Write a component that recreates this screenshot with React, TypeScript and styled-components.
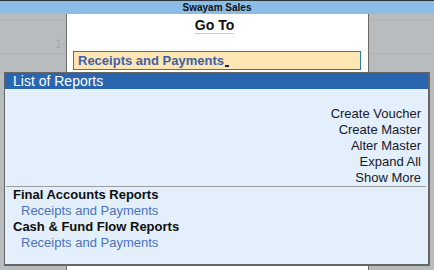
import styled, { createGlobalStyle } from 'styled-components';

const GlobalStyle = createGlobalStyle`
  html, body {
    margin: 0;
    padding: 0;
  }
  body {
    font-family: "Liberation Sans", Arial, sans-serif;
  }
`;

const Screen = styled.div`
  position: relative;
  display: flex;
  flex-direction: column;
  width: 434px;
  height: 270px;
  overflow: hidden;
  background: #b8bcbf;
`;

const TopBar = styled.div`
  height: 13px;
  border-top: 1px solid #2b363c;
  background: #8bbde6;
  font-size: 10px;
  font-weight: 700;
  line-height: 13px;
  text-align: center;
  color: #111;
`;

const Workspace = styled.div`
  flex: 1;
  display: flex;
  background:
    linear-gradient(#afb3b6, #afb3b6) 0 6px / 100% 1px no-repeat,
    linear-gradient(#afb3b6, #afb3b6) 0 39px / 100% 1px no-repeat,
    #b8bcbf;
`;

const Gutter = styled.div`
  width: 66px;
  padding: 23px 0 0 55px;
  box-sizing: border-box;
  white-space: nowrap;
  font-size: 12px;
  color: #a4a8ab;
`;

const GoToPanel = styled.div`
  display: flex;
  flex-direction: column;
  align-items: flex-start;
  width: 301px;
  border-left: 1px solid #707070;
  border-right: 1px solid #6a6a6a;
  background: #fff;
`;

const PanelTitle = styled.div`
  align-self: center;
  margin-top: 3px;
  margin-left: -6px;
  font-size: 14px;
  font-weight: 700;
  line-height: 16px;
  color: #111;
  border-bottom: 1px solid #c9c9c9;
`;

const SearchField = styled.div`
  display: flex;
  align-items: center;
  width: 288px;
  height: 19px;
  margin: 17px 0 0 6px;
  padding-left: 4px;
  box-sizing: border-box;
  border: 1px solid #2b7cb6;
  background: #fee6b3;
  font-size: 13px;
  font-weight: 700;
  color: #3c60a8;
`;

const Caret = styled.span`
  display: inline-block;
  width: 4px;
  height: 2px;
  margin: 11px 0 0 1px;
  background: #1a2550;
`;

const ReportList = styled.div`
  position: absolute;
  top: 72px;
  left: 4px;
  display: flex;
  flex-direction: column;
  width: 426px;
  height: 194px;
  box-sizing: border-box;
  border: 1px solid #666;
  border-right-width: 2px;
  border-bottom-width: 2px;
  background: #e3f0fb;
`;

const ListHeader = styled.div`
  height: 16px;
  padding-left: 8px;
  background: #2a66b0;
  font-size: 14px;
  line-height: 16px;
  color: #fff;
`;

const ActionList = styled.div`
  display: flex;
  flex-direction: column;
  align-items: flex-end;
  margin: 0 0 0 1px;
  padding: 17px 5px 0 0;
  border-bottom: 1px solid #9a9c9e;
  width: 420px;
  box-sizing: border-box;
`;

const Action = styled.div`
  font-size: 13px;
  line-height: 16px;
  color: #16182a;
`;

const Groups = styled.div`
  display: flex;
  flex-direction: column;
  padding: 0 0 0 8px;
`;

const GroupTitle = styled.div`
  font-size: 13px;
  font-weight: 700;
  line-height: 16px;
  color: #0d0d0d;
`;

const GroupItem = styled.div`
  padding-left: 8px;
  font-size: 13px;
  line-height: 16px;
  color: #4a72c0;
`;

const actions = ['Create Voucher', 'Create Master', 'Alter Master', 'Expand All', 'Show More'];

const groups = [
  { title: 'Final Accounts Reports', items: ['Receipts and Payments'] },
  { title: 'Cash & Fund Flow Reports', items: ['Receipts and Payments'] },
];

export default function App() {
  return (
    <>
      <GlobalStyle />
      <Screen>
        <TopBar>Swayam Sales</TopBar>
        <Workspace>
          <Gutter>1-</Gutter>
          <GoToPanel>
            <PanelTitle>Go To</PanelTitle>
            <SearchField>
              Receipts and Payments
              <Caret />
            </SearchField>
          </GoToPanel>
        </Workspace>
        <ReportList>
          <ListHeader>List of Reports</ListHeader>
          <ActionList>
            {actions.map((a) => (
              <Action key={a}>{a}</Action>
            ))}
          </ActionList>
          <Groups>
            {groups.map((g) => (
              <div key={g.title}>
                <GroupTitle>{g.title}</GroupTitle>
                {g.items.map((it) => (
                  <GroupItem key={it}>{it}</GroupItem>
                ))}
              </div>
            ))}
          </Groups>
        </ReportList>
      </Screen>
    </>
  );
}
